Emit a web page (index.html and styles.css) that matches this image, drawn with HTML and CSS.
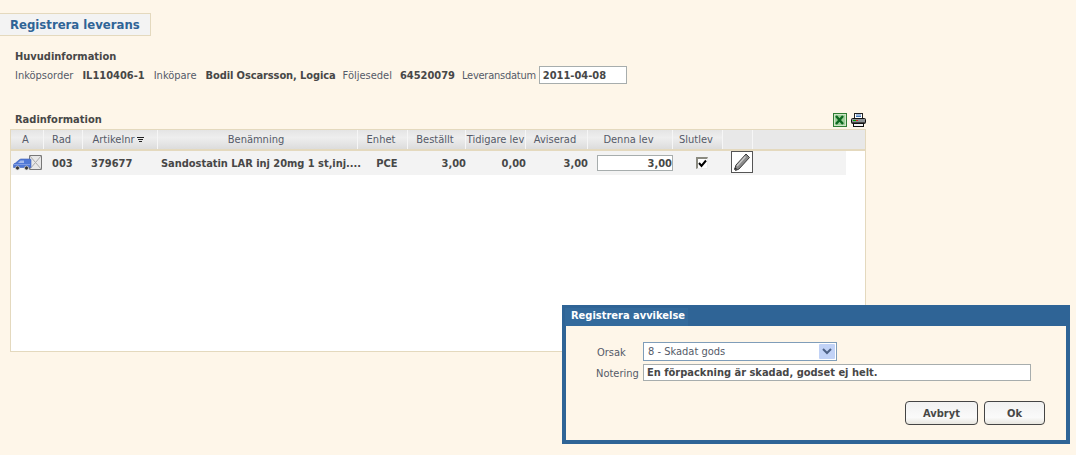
FILE: index.html
```html
<!DOCTYPE html>
<html lang="sv">
<head>
<meta charset="utf-8">
<title>Registrera leverans</title>
<link rel="stylesheet" href="styles.css">
</head>
<body>
<h1 class="page-title">Registrera leverans</h1>
<section class="main-info">
  <h2 class="section-title">Huvudinformation</h2>
  <div class="info-row">
    <span class="lbl">Inköpsorder</span><b class="val val-order">IL110406-1</b>
    <span class="lbl">Inköpare</span><b class="val val-buyer">Bodil Oscarsson, Logica</b>
    <span class="lbl">Följesedel</span><b class="val val-note">64520079</b>
    <span class="lbl lbl-date">Leveransdatum</span><input class="date" type="text" value="2011-04-08">
  </div>
</section>
<div class="rows-head">
  <h2 class="section-title">Radinformation</h2>
  <div class="tools">
    <svg width="14" height="14" viewBox="0 0 14 14"><rect width="14" height="14" fill="#2f7d32"/><rect x="1" y="1" width="12" height="12" fill="#cfe6c8"/><rect x="2" y="2" width="10" height="10" fill="#9fcf9a"/><path d="M3 3l7 8M10 3l-7 8" stroke="#0d6a1f" stroke-width="2.4"/></svg>
    <svg width="15" height="14" viewBox="0 0 15 14"><rect x="3.500" y=".5" width="8" height="5" fill="#fff" stroke="#222"/><path d="M5 2h5M5 3.500h5" stroke="#3f73b5"/><rect x=".5" y="5.500" width="14" height="5" rx="1" fill="#8d9296" stroke="#111"/><rect x="2" y="7" width="3" height="1" fill="#0a0"/><rect x="5" y="7" width="2" height="1" fill="#d22"/><path d="M1 9.500h13" stroke="#444"/><rect x="2.500" y="10.500" width="10" height="3" fill="#f4f4f4" stroke="#111"/></svg>
  </div>
</div>
<section class="grid-panel">
  <div class="grid-head">
    <div>A</div><div>Rad</div>
    <div>Artikelnr <svg class="sort" width="7" height="6" viewBox="0 0 7 6"><path d="M0 .5h7M1 2.500h5M2 4.500h3" stroke="#222"/></svg></div>
    <div>Benämning</div><div>Enhet</div><div>Beställt</div><div class="tight">Tidigare lev</div><div>Aviserad</div><div>Denna lev</div><div>Slutlev</div><div></div><div></div>
  </div>
  <div class="grid-row">
    <div class="c-icon">
      <svg width="29" height="16" viewBox="0 0 29 16"><path d="M16.500 .5h12v14h-12z" fill="#e8e8e8" stroke="#777"/><path d="M16.500 .5l6 7 6-7M16.500 14.500l6-7 6 7" fill="none" stroke="#aaa"/><path d="M.5 12.500V10q0-1.500 2-2l3.500-3q1-1 2-1h9q1 0 1 1v7.500z" fill="#5078d6" stroke="#3d60b5" stroke-width=".6"/><path d="M5 8l2.500-2.500H11V8z" fill="#a4b9ec"/><path d="M1 9.500h16" stroke="#7f9de4"/><circle cx="4.500" cy="13" r="2" fill="#333" stroke="#ddd" stroke-width=".7"/><circle cx="13.500" cy="13" r="2" fill="#333" stroke="#ddd" stroke-width=".7"/></svg>
    </div>
    <div class="c-mid c-rad">003</div>
    <div class="c-mid">379677</div>
    <div class="c-name">Sandostatin LAR inj 20mg 1 st,inj....</div>
    <div class="c-mid center">PCE</div>
    <div class="num">3,00</div>
    <div class="num">0,00</div>
    <div class="num">3,00</div>
    <div class="c-qty"><input class="qty" type="text" value="3,00"></div>
    <div class="c-check"><span class="check"><svg width="9" height="9" viewBox="0 0 9 9"><path d="M1 4l2.500 3L8 1.500" fill="none" stroke="#000" stroke-width="2"/></svg></span></div>
    <div class="c-attach"><span class="attach"><svg width="18" height="18" viewBox="0 0 18 18"><path d="M13 1l3.500 3.500L6 16l-3.500 1.500-1-1L3 12z" fill="#8a8a8a" stroke="#3c3c3c"/><path d="M12.500 3.500L4 13" stroke="#c8c8c8" stroke-width="1.500"/><path d="M2 15l1.500 1.500" stroke="#222" stroke-width="1.500"/></svg></span></div>
    <div></div>
  </div>
</section>
<aside class="dialog">
  <h3 class="dialog-title"><span>Registrera avvikelse</span></h3>
  <div class="dialog-body">
    <div class="field field-reason">
      <label class="lbl">Orsak</label>
      <div class="select"><span>8 - Skadat gods</span><i class="arrow"><svg width="10" height="7" viewBox="0 0 10 7"><path d="M1 1l4 4 4-4" fill="none" stroke="#4d6185" stroke-width="2"/></svg></i></div>
    </div>
    <div class="field">
      <label class="lbl">Notering</label>
      <input class="note" type="text" value="En förpackning är skadad, godset ej helt.">
    </div>
    <div class="actions">
      <button class="btn btn-cancel" type="button">Avbryt</button>
      <button class="btn btn-ok" type="button">Ok</button>
    </div>
  </div>
</aside>
</body>
</html>
```
FILE: styles.css
```css
* { box-sizing: border-box; }
html, body { margin: 0; height: 455px; overflow: hidden; }
body {
  background: #fef6e9;
  color: #555a68;
  font: 11px/14px "DejaVu Sans Condensed", "DejaVu Sans", sans-serif;
  padding-top: 13px;
  position: relative;
}
.page-title {
  width: 151px;
  height: 23px;
  margin: 0;
  padding-left: 10px;
  background: #f3f3f3;
  border: 1px solid #e4d9be;
  border-left: 0;
  color: #2f6496;
  font: bold 13px/21px "DejaVu Sans Condensed", "DejaVu Sans", sans-serif;
  white-space: nowrap;
}
.section-title {
  margin: 0;
  color: #474747;
  font: bold 11px/14px "DejaVu Sans Condensed", "DejaVu Sans", sans-serif;
}
.main-info { padding: 14px 0 0 15px; }
.info-row { display: flex; align-items: center; height: 18px; margin-top: 2px; white-space: nowrap; }
.lbl { padding-top: 2px; }
.lbl-date { letter-spacing: -.25px; }
.val { padding-top: 2px; color: #474747; font: bold 11px/14px "DejaVu Sans Condensed", "DejaVu Sans", sans-serif; }
.val-order { margin: 0 9px; }
.val-buyer { margin: 0 7px 0 9px; letter-spacing: -.1px; }
.val-note { margin: 0 7px 0 8px; }
.date {
  width: 88px;
  height: 18px;
  margin-left: 3px;
  padding: 0 3px;
  border: 1px solid #a7adad;
  background: #fff;
  color: #474747;
  font: bold 11px "DejaVu Sans Condensed", "DejaVu Sans", sans-serif;
}
.rows-head {
  display: flex;
  justify-content: space-between;
  align-items: center;
  width: 866px;
  height: 16px;
  margin-top: 28px;
  padding: 0 0 0 15px;
}
.tools { display: flex; gap: 4px; }
.grid-panel {
  width: 856px;
  height: 223px;
  margin: 1px 0 0 10px;
  background: #fff;
  border: 1px solid #e4d9be;
}
.grid-head, .grid-row {
  display: grid;
  grid-template-columns: 33px 39px 75px 200px 50px 58px 60px 62px 85px 50px 30px 1fr;
}
.grid-head {
  height: 21px;
  background: linear-gradient(#e4e4e4, #eeeeee 40%, #dcdcdc);
  border-bottom: 2px solid #e4d9be;
}
.grid-head > div {
  display: flex;
  justify-content: center;
  align-items: center;
  gap: 3px;
  padding: 1px 3px 0 0;
  border-right: 1px solid #f6f6f6;
  white-space: nowrap;
}
.grid-head > div:last-child { border-right: 0; background: #e8e8e8; }
.grid-head > div:nth-child(11) { background: #e8e8e8; }
.grid-head > .tight { padding-right: 0; }
.sort { display: block; }
.grid-row {
  width: 835px;
  height: 24px;
  background: #f3f3f3;
  align-items: center;
  color: #474747;
  font: bold 11px/14px "DejaVu Sans Condensed", "DejaVu Sans", sans-serif;
}
.c-icon { padding: 0 0 0 2px; display: flex; }
.c-mid { padding: 1px 0 0 8px; white-space: nowrap; }
.center { text-align: center; }
.c-name { padding: 1px 0 0 3px; white-space: nowrap; letter-spacing: -.03px; }
.num { padding-top: 1px; text-align: right; }
.c-qty { padding-left: 9px; display: flex; }
.qty {
  width: 76px;
  height: 16px;
  padding: 0;
  border: 1px solid #a7adad;
  background: #fff;
  color: #474747;
  text-align: right;
  font: bold 11px "DejaVu Sans Condensed", "DejaVu Sans", sans-serif;
}
.c-check { display: flex; justify-content: center; padding-left: 8px; }
.check {
  display: flex;
  justify-content: center;
  align-items: center;
  width: 12px;
  height: 12px;
  background: #fff;
  border: 2px solid #8a8a80;
  border-right: 1px solid #eee;
  border-bottom: 1px solid #eee;
}
.c-attach { padding-left: 8px; }
.attach {
  display: flex;
  justify-content: center;
  align-items: center;
  width: 22px;
  height: 22px;
  margin-top: -2px;
  background: #fff;
  border: 1px solid #555;
}
.dialog {
  position: absolute;
  left: 562px;
  top: 305px;
  width: 508px;
  height: 139px;
  border: 4px solid #2f6496;
  border-top: 0;
  background: #fef6e9;
}
.dialog-title {
  height: 21px;
  margin: 0 -4px;
  padding: 3px 0 0 3px;
  background: #2f6496;
}
.dialog-title span {
  display: block;
  width: 123px;
  height: 18px;
  padding-left: 6px;
  background: #336a9c;
  color: #fff;
  font: bold 11px/16px "DejaVu Sans Condensed", "DejaVu Sans", sans-serif;
  white-space: nowrap;
}
.dialog-body { padding: 16px 0 0 30px; }
.field { display: flex; align-items: center; height: 17px; margin-bottom: 3px; }
.field-reason { height: 19px; }
.field .lbl { width: 47px; flex: none; }
.field-reason .lbl { padding-left: 1px; }
.select {
  display: flex;
  justify-content: space-between;
  align-items: center;
  width: 194px;
  height: 19px;
  padding: 0 1px 0 4px;
  background: #fff;
  border: 1px solid #7f9db9;
}
.arrow {
  display: flex;
  justify-content: center;
  align-items: center;
  width: 16px;
  height: 15px;
  background: #c1d2f6;
  border-radius: 1px;
}
.note {
  width: 388px;
  height: 17px;
  padding: 0 3px;
  background: #fff;
  border: 1px solid #a7adad;
  color: #474747;
  font: bold 11px "DejaVu Sans Condensed", "DejaVu Sans", sans-serif;
}
.actions { display: flex; gap: 6px; margin-top: 20px; padding-left: 309px; }
.btn {
  height: 24px;
  padding: 0;
  background: linear-gradient(#f1f1f1, #fafafa 70%, #e8e6df);
  border: 1px solid #444;
  border-radius: 4px;
  color: #474747;
  font: bold 11px "DejaVu Sans Condensed", "DejaVu Sans", sans-serif;
}
.btn-cancel { width: 73px; }
.btn-ok { width: 61px; }
```
